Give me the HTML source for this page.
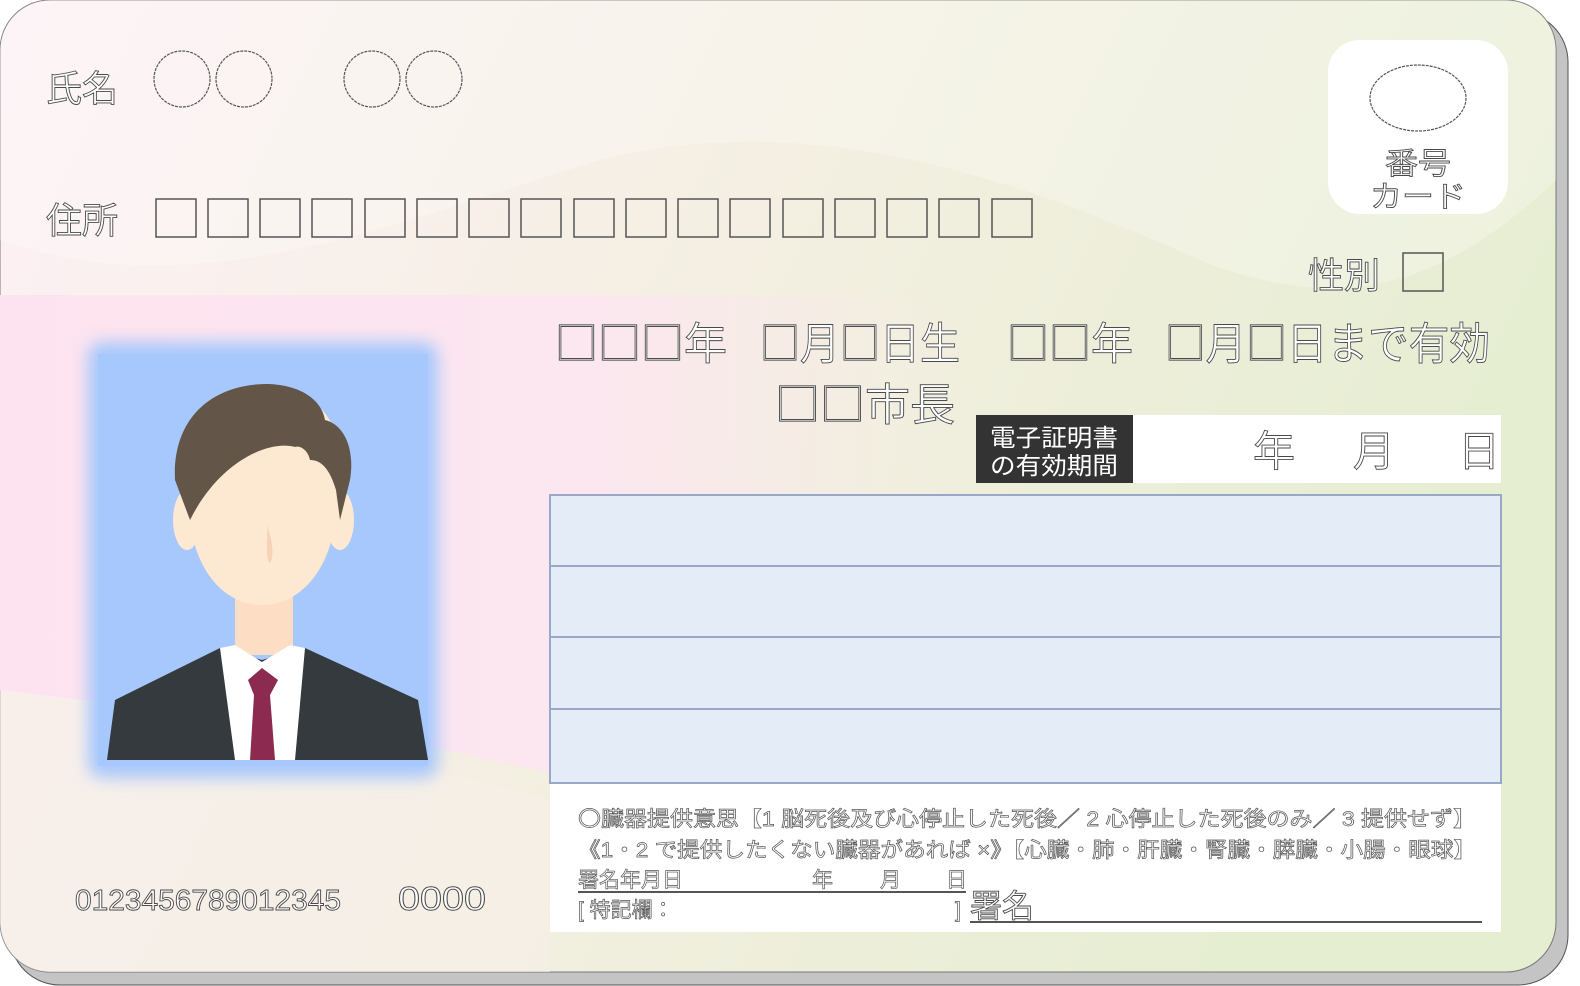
<!DOCTYPE html>
<html><head><meta charset="utf-8"><style>
html,body{margin:0;padding:0;background:#fff;overflow:hidden;width:1580px;height:986px;}
svg{display:block}
.t{font-family:"Liberation Sans","Noto Sans CJK JP",sans-serif;fill:#fff;stroke:#4a4a4a;stroke-width:0.9;}
.j{font-family:"Noto Sans CJK JP",sans-serif;fill:#fff;stroke:#4a4a4a;stroke-width:0.9;}
.s{font-family:"Liberation Sans","Noto Sans CJK JP",sans-serif;fill:#fff;stroke:#555;stroke-width:0.7;}
</style></head><body>
<svg width="1580" height="986" viewBox="0 0 1580 986" xmlns="http://www.w3.org/2000/svg">
<defs>
<linearGradient id="bg" x1="0" y1="0" x2="1" y2="0.3">
<stop offset="0" stop-color="#fdf0f5"/><stop offset="0.5" stop-color="#f4efe2"/><stop offset="1" stop-color="#e6eed2"/>
</linearGradient>
<linearGradient id="pk" x1="0" y1="0" x2="1" y2="0">
<stop offset="0" stop-color="#fde3ef"/><stop offset="0.6" stop-color="#fce6f0"/><stop offset="1" stop-color="#f7ece6" stop-opacity="0"/>
</linearGradient>
<filter id="bl"><feGaussianBlur stdDeviation="8"/></filter>
<clipPath id="cc"><rect x="0" y="0" width="1556" height="972" rx="50"/></clipPath>
</defs>
<rect x="10" y="12" width="1558" height="973" rx="50" fill="#c4c4c4" stroke="#555" stroke-width="1"/>
<rect x="0" y="0" width="1556" height="972" rx="50" fill="url(#bg)" stroke="#777" stroke-width="1"/>
<g clip-path="url(#cc)">
<path d="M0 240 C200 310 400 220 600 160 C800 110 1000 170 1200 260 C1350 320 1450 280 1556 180 L1556 0 L0 0Z" fill="#ffffff" opacity="0.25"/>
<path d="M0 295 L900 295 C950 300 970 330 980 480 L980 800 C700 820 500 760 400 740 L0 690Z" fill="url(#pk)"/>
<path d="M0 690 C200 720 400 760 550 800 L550 972 L0 972Z" fill="#f6efe9" opacity="0.6"/>
</g>
<text class="j" x="46" y="101" font-size="36">氏名</text>
<g fill="none" stroke="#555" stroke-width="1.2" stroke-dasharray="3 1">
<circle cx="182" cy="79" r="28"/><circle cx="244" cy="79" r="28"/>
<circle cx="372" cy="79" r="28"/><circle cx="434" cy="79" r="28"/>
</g>
<text class="j" x="46" y="233" font-size="36">住所</text>
<g fill="none" stroke="#555" stroke-width="1.5">
<rect x="156" y="199" width="40" height="38"/><rect x="208" y="199" width="40" height="38"/><rect x="260" y="199" width="40" height="38"/><rect x="312" y="199" width="40" height="38"/><rect x="365" y="199" width="40" height="38"/><rect x="417" y="199" width="40" height="38"/><rect x="469" y="199" width="40" height="38"/><rect x="521" y="199" width="40" height="38"/><rect x="574" y="199" width="40" height="38"/><rect x="626" y="199" width="40" height="38"/><rect x="678" y="199" width="40" height="38"/><rect x="730" y="199" width="40" height="38"/><rect x="783" y="199" width="40" height="38"/><rect x="835" y="199" width="40" height="38"/><rect x="887" y="199" width="40" height="38"/><rect x="939" y="199" width="40" height="38"/><rect x="992" y="199" width="40" height="38"/>
</g>
<rect x="1328" y="40" width="180" height="174" rx="32" fill="#fff"/>
<ellipse cx="1418" cy="98" rx="48" ry="33" fill="none" stroke="#555" stroke-width="1.2" stroke-dasharray="3 1"/>
<text class="j" x="1418" y="174" font-size="30" text-anchor="middle" textLength="66" lengthAdjust="spacingAndGlyphs">番号</text>
<text class="j" x="1418" y="207" font-size="30" text-anchor="middle" textLength="96" lengthAdjust="spacingAndGlyphs">カード</text>
<text class="j" x="1308" y="288" font-size="36">性別</text>
<rect x="1403" y="253" width="40" height="38" fill="none" stroke="#555" stroke-width="1.5"/>
<text class="j" x="555" y="359" font-size="44" textLength="172" lengthAdjust="spacingAndGlyphs">□□□年</text>
<text class="j" x="760" y="359" font-size="44" textLength="200" lengthAdjust="spacingAndGlyphs">□月□日生</text>
<text class="j" x="1007" y="359" font-size="44" textLength="126" lengthAdjust="spacingAndGlyphs">□□年</text>
<text class="j" x="1165" y="359" font-size="44" textLength="325" lengthAdjust="spacingAndGlyphs">□月□日まで有効</text>
<text class="j" x="775" y="420" font-size="44" textLength="180" lengthAdjust="spacingAndGlyphs">□□市長</text>
<rect x="976" y="415" width="157" height="68" fill="#333"/>
<text x="1054" y="446" font-size="24" text-anchor="middle" fill="#fff" font-family="Noto Sans CJK JP,sans-serif" textLength="128" lengthAdjust="spacingAndGlyphs">電子証明書</text>
<text x="1054" y="474" font-size="24" text-anchor="middle" fill="#fff" font-family="Noto Sans CJK JP,sans-serif" textLength="128" lengthAdjust="spacingAndGlyphs">の有効期間</text>
<rect x="1133" y="415" width="368" height="68" fill="#fff"/>
<text class="j" x="1253" y="466" font-size="42">年</text>
<text class="j" x="1353" y="466" font-size="42">月</text>
<text class="j" x="1458" y="466" font-size="42">日</text>
<rect x="550" y="495" width="951" height="288" fill="#e4ecf8" stroke="#9aa8c8" stroke-width="2"/>
<line x1="550" y1="566" x2="1501" y2="566" stroke="#9aa8c8" stroke-width="2"/>
<line x1="550" y1="637" x2="1501" y2="637" stroke="#9aa8c8" stroke-width="2"/>
<line x1="550" y1="709" x2="1501" y2="709" stroke="#9aa8c8" stroke-width="2"/>
<rect x="550" y="784" width="951" height="148" fill="#fff"/>
<text class="s" x="578" y="826" font-size="21" textLength="898" lengthAdjust="spacingAndGlyphs">〇臓器提供意思【1 脳死後及び心停止した死後／ 2 心停止した死後のみ／ 3 提供せず】</text>
<text class="s" x="578" y="857" font-size="21" textLength="898" lengthAdjust="spacingAndGlyphs">《1・2 で提供したくない臓器があれば ×》【心臓・肺・肝臓・腎臓・膵臓・小腸・眼球】</text>
<text class="s" x="578" y="887" font-size="21">署名年月日</text>
<text class="s" x="812" y="887" font-size="21">年</text>
<text class="s" x="880" y="887" font-size="21">月</text>
<text class="s" x="946" y="887" font-size="21">日</text>
<line x1="578" y1="892" x2="966" y2="892" stroke="#555" stroke-width="2"/>
<text class="s" x="578" y="917" font-size="21">[ 特記欄：</text>
<text class="s" x="955" y="917" font-size="21">]</text>
<text class="j" x="970" y="917" font-size="32">署名</text>
<line x1="970" y1="922" x2="1482" y2="922" stroke="#555" stroke-width="2"/>
<text class="t" x="75" y="910" font-size="29" textLength="266" lengthAdjust="spacingAndGlyphs">0123456789012345</text>
<text class="t" x="398" y="910" font-size="33" textLength="88" lengthAdjust="spacingAndGlyphs">0000</text>
<rect x="88" y="342" width="350" height="436" rx="14" fill="#a7c8fc" filter="url(#bl)"/>
<rect x="98" y="354" width="330" height="412" fill="#a7c8fc"/>
<g>
<ellipse cx="187" cy="520" rx="14" ry="30" fill="#fde9d1"/>
<ellipse cx="340" cy="520" rx="14" ry="30" fill="#fde9d1"/>
<rect x="235" y="580" width="58" height="75" fill="#fddec4"/>
<path d="M107 760 L115 700 L220 648 L262 660 L305 648 L418 700 L428 760Z" fill="#353a3f"/>
<path d="M220 648 L235 645 L262 662 L290 645 L305 648 L295 760 L235 760Z" fill="#fff"/>
<path d="M248 680 L262 668 L278 680 L270 695 L275 760 L250 760 L254 695Z" fill="#8d2a4f"/>
<path d="M182 470 C180 410 220 385 265 385 C310 385 345 420 340 470 L335 520 C330 570 300 605 262 605 C224 605 195 570 190 520Z" fill="#fde9d1"/>
<path d="M175 480 C172 420 210 385 265 384 C300 384 322 400 325 420 C345 425 355 450 350 480 L340 520 L336 490 C330 470 322 460 310 460 C308 450 300 445 295 447 C270 440 220 460 190 520Z" fill="#635548"/>
<path d="M267 525 C272 540 275 555 270 563 C265 560 268 540 267 525Z" fill="#f7d3b5"/>
</g>
</svg>
</body></html>
